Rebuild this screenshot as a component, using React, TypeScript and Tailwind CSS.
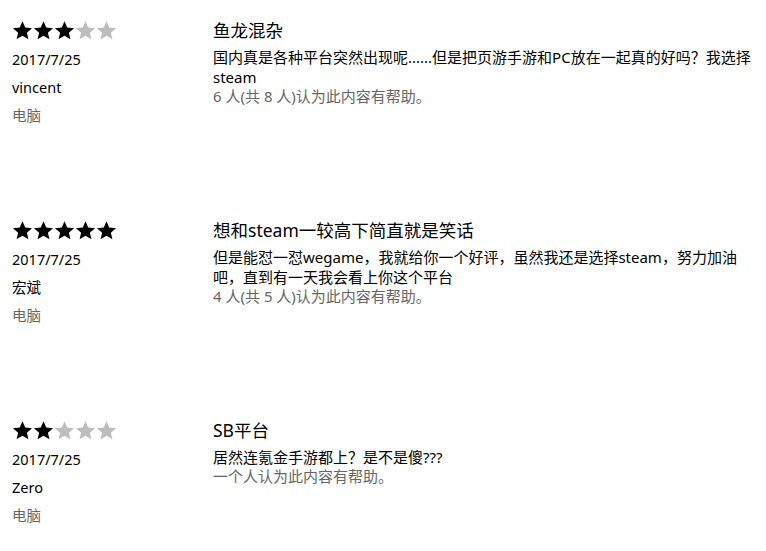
const reviews = [
  {
    rating: 3,
    date: '2017/7/25',
    name: 'vincent',
    device: '电脑',
    title: '鱼龙混杂',
    body: '国内真是各种平台突然出现呢......但是把页游手游和PC放在一起真的好吗？我选择steam',
    helpful: '6 人(共 8 人)认为此内容有帮助。',
  },
  {
    rating: 5,
    date: '2017/7/25',
    name: '宏斌',
    device: '电脑',
    title: '想和steam一较高下简直就是笑话',
    body: '但是能怼一怼wegame，我就给你一个好评，虽然我还是选择steam，努力加油吧，直到有一天我会看上你这个平台',
    helpful: '4 人(共 5 人)认为此内容有帮助。',
  },
  {
    rating: 2,
    date: '2017/7/25',
    name: 'Zero',
    device: '电脑',
    title: 'SB平台',
    body: '居然连氪金手游都上？是不是傻???',
    helpful: '一个人认为此内容有帮助。',
  },
];

function Star({ filled }: { filled: boolean }) {
  return (
    <svg viewBox="0 0 24 24" className="w-[21px] h-[21px]">
      <path
        d="M12 1.5l3.1 7.2 7.8.7-5.9 5.1 1.8 7.6L12 18.1l-6.8 4 1.8-7.6-5.9-5.1 7.8-.7z"
        fill={filled ? '#000000' : '#bdbdbd'}
      />
    </svg>
  );
}

export default function App() {
  return (
    <div
      className="bg-white pt-[19px] px-[12px] text-black"
      style={{ fontFamily: '"Noto Sans", "Noto Sans CJK SC", sans-serif' }}
    >
      {reviews.map((r, i) => (
        <div key={i} className="flex h-[200px] last:h-auto">
          <div className="w-[201px] shrink-0">
            <div className="flex h-[22px] items-center">
              {[1, 2, 3, 4, 5].map((n) => (
                <Star key={n} filled={n <= r.rating} />
              ))}
            </div>
            <div className="mt-[4px] text-[14.5px] leading-[28px]">{r.date}</div>
            <div className="text-[14.5px] leading-[28px]">{r.name}</div>
            <div className="text-[14.5px] leading-[28px] text-[#666666]">{r.device}</div>
          </div>
          <div className="w-[540px]">
            <div className="text-[17.5px] leading-[22px]">{r.title}</div>
            <div className="mt-[6px] text-[15px] leading-[20px]">{r.body}</div>
            <div className="text-[15px] leading-[19px] text-[#666666]">{r.helpful}</div>
          </div>
        </div>
      ))}
    </div>
  );
}
